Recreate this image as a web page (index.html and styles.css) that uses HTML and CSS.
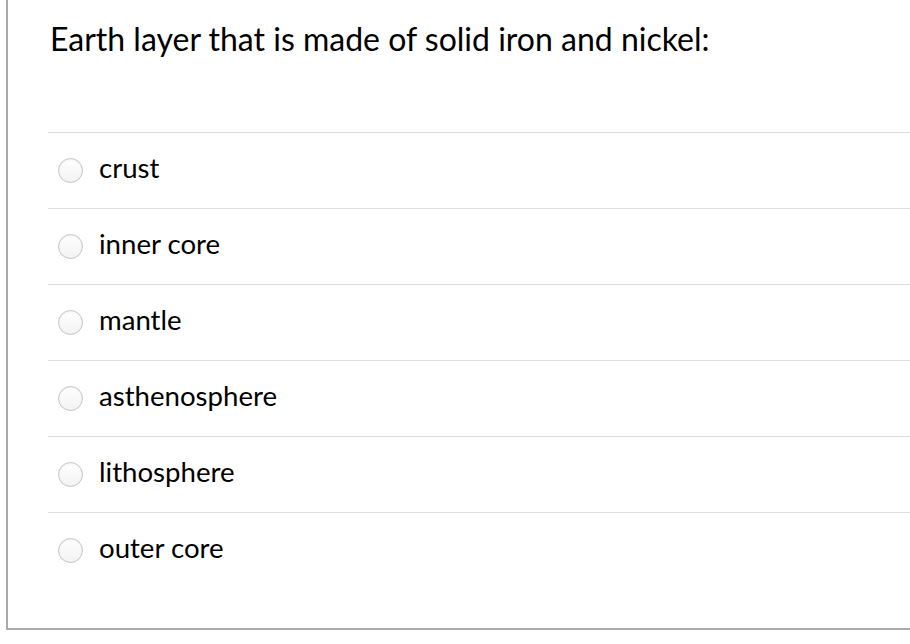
FILE: index.html
```html
<!DOCTYPE html>
<html>
<head>
<meta charset="utf-8">
<link rel="stylesheet" href="styles.css">
</head>
<body>
<div class="question">
  <div class="question-text">Earth layer that is made of solid iron and nickel:</div>
  <div class="answers">
    <label class="answer"><span class="radio"></span><span class="answer-text">crust</span></label>
    <label class="answer"><span class="radio"></span><span class="answer-text">inner core</span></label>
    <label class="answer"><span class="radio"></span><span class="answer-text">mantle</span></label>
    <label class="answer"><span class="radio"></span><span class="answer-text">asthenosphere</span></label>
    <label class="answer"><span class="radio"></span><span class="answer-text">lithosphere</span></label>
    <label class="answer"><span class="radio"></span><span class="answer-text">outer core</span></label>
  </div>
</div>
</body>
</html>
```
FILE: styles.css
```css
html, body {
  margin: 0;
  padding: 0;
  background: #fff;
}
body {
  font-family: Lato, "Liberation Sans", sans-serif;
  color: #000;
}
.question {
  margin-left: 6px;
  height: 628px;
  border-left: 2px solid #aaa;
  border-bottom: 2px solid #aaa;
  box-sizing: content-box;
}
.question-text {
  padding: 20px 0 0 42px;
  font-size: 32px;
  line-height: 38px;
  height: 38px;
}
.answers {
  margin: 74px 0 0 40px;
  display: flex;
  flex-direction: column;
}
.answer {
  display: flex;
  align-items: center;
  height: 75px;
  border-top: 1px solid #ddd;
}
.radio {
  width: 23px;
  height: 23px;
  margin-left: 10px;
  border-radius: 50%;
  border: 1px solid #c6c6c6;
  background: linear-gradient(#ffffff, #f2f2f2);
  box-shadow: inset 0 1px 2px rgba(0,0,0,0.06);
  flex: none;
}
.answer-text {
  margin-left: 16px;
  margin-bottom: 6px;
  font-size: 27.6px;
  line-height: 32px;
}
```
